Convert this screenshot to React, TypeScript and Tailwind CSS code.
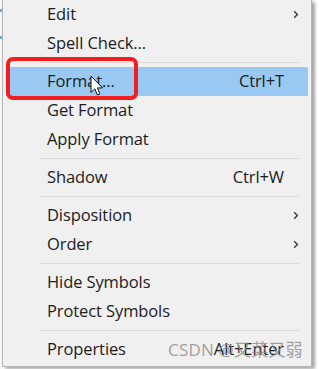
import React from 'react';

type Item =
  | { kind: 'item'; label: string; shortcut?: string; submenu?: boolean; active?: boolean }
  | { kind: 'sep' };

const items: Item[] = [
  { kind: 'item', label: 'Edit', submenu: true },
  { kind: 'item', label: 'Spell Check...' },
  { kind: 'sep' },
  { kind: 'item', label: 'Format...', shortcut: 'Ctrl+T', active: true },
  { kind: 'item', label: 'Get Format' },
  { kind: 'item', label: 'Apply Format' },
  { kind: 'sep' },
  { kind: 'item', label: 'Shadow', shortcut: 'Ctrl+W' },
  { kind: 'sep' },
  { kind: 'item', label: 'Disposition', submenu: true },
  { kind: 'item', label: 'Order', submenu: true },
  { kind: 'sep' },
  { kind: 'item', label: 'Hide Symbols' },
  { kind: 'item', label: 'Protect Symbols' },
  { kind: 'sep' },
  { kind: 'item', label: 'Properties', shortcut: 'Alt+Enter' },
];

const Chevron = () => (
  <svg width="6" height="9" viewBox="0 0 6 9" fill="none">
    <path d="M1.2 1.2L4.4 4.5L1.2 7.8" stroke="#3a3a3a" strokeWidth="1.4" />
  </svg>
);

const Cursor = () => (
  <svg width="14" height="22" viewBox="0 0 14 22" className="absolute left-[90px] top-[75px]">
    <path
      d="M1 1V17.5L4.8 13.8L7.4 20L9.9 18.9L7.4 12.9H12.6Z"
      fill="#ffffff"
      stroke="#111111"
      strokeWidth="1"
      strokeLinejoin="round"
    />
  </svg>
);

export default function App() {
  return (
    <div
      className="relative w-[319px] h-[369px] overflow-hidden bg-white flex"
      style={{ fontFamily: '"Open Sans", "Noto Sans CJK SC", sans-serif' }}
    >
      {/* sliver of the window behind */}
      <div className="relative w-[2px] bg-[#f7f7f7]">
        <div className="absolute left-0 top-[9px] w-[2px] h-[3px] bg-[#6aa6d6]" />
        <div className="absolute left-0 top-[36px] w-[2px] h-[3px] bg-[#6aa6d6]" />
      </div>

      <div className="w-[310px] h-[367px] bg-[#f0f0f0] border-l border-r border-b border-[#b4b4b4] shadow-[3px_2px_3px_rgba(0,0,0,0.35)]">
        {items.map((it, i) =>
          it.kind === 'sep' ? (
            <div key={i} className="h-[9px] flex items-center pl-[37px] pr-[12px]">
              <div className="h-px w-full bg-[#d9d9d9]" />
            </div>
          ) : (
            <div
              key={i}
              className={`h-[29px] mx-[3px] flex items-center pl-[41px] text-[16.5px] tracking-[-0.1px] text-[#1c1c1c] ${
                it.active ? 'bg-[#99c9f2]' : ''
              }`}
            >
              <span className="flex-1">{it.label}</span>
              {it.shortcut && <span>{it.shortcut}</span>}
              <span className="w-[24px] flex justify-center">{it.submenu && <Chevron />}</span>
            </div>
          )
        )}
      </div>

      {/* annotation box */}
      <div className="absolute left-[6px] top-[57px] w-[132px] h-[43px] border-4 border-[#f41d1d] rounded-[7px]" />
      <Cursor />

      {/* watermark */}
      <div className="absolute left-[168px] top-[337px] text-[17px] text-[#8a8a8a]/80 tracking-[0.2px] whitespace-nowrap">
        CSDN @又菜又弱
      </div>
    </div>
  );
}
